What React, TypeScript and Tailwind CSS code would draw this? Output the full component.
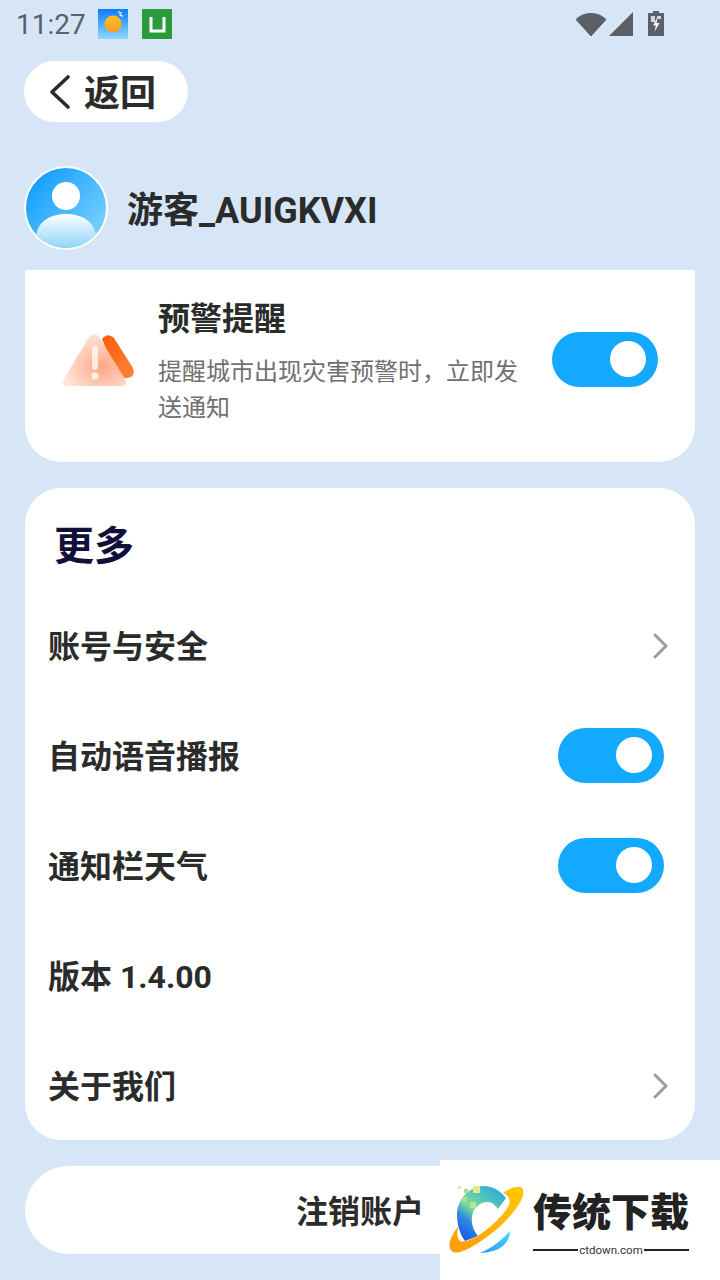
import React from "react";

const font = "font-['Roboto','Noto_Sans_CJK_SC',sans-serif]";

function Toggle() {
  return (
    <div className="flex h-[55px] w-[106px] items-center justify-end rounded-full bg-[#13a9ff] pr-[12px]">
      <div className="h-[36px] w-[36px] rounded-full bg-white" />
    </div>
  );
}

function Chevron() {
  return (
    <svg width="18" height="26" viewBox="0 0 18 26" fill="none" className="mr-[-5px] mb-[2px] block">
      <path d="M4 2 L15 13 L4 24" stroke="#9a9da1" strokeWidth="3" strokeLinecap="round" strokeLinejoin="round" />
    </svg>
  );
}

function Row({ label, right }: { label: string; right?: React.ReactNode }) {
  return (
    <div className="flex h-[110px] items-center justify-between pl-[23px]">
      <span className="text-[32px] leading-[40px] font-bold text-[#2b2b2b]">{label}</span>
      {right}
    </div>
  );
}

function StatusBar() {
  return (
    <div className="flex h-[48px] items-center justify-between pl-[16px] pr-[55px]">
      <div className="flex items-center">
        <span className="pt-[2px] text-[28px] leading-[50px] text-[#5b6066]">11:27</span>
        <svg width="30" height="30" viewBox="0 0 30 30" className="ml-[12px]">
          <defs>
            <linearGradient id="sky" x1="0" y1="0" x2="0" y2="1">
              <stop offset="0" stopColor="#0a7cff" />
              <stop offset="1" stopColor="#8fd8fb" />
            </linearGradient>
            <linearGradient id="sun" x1="0" y1="0" x2="0" y2="1">
              <stop offset="0" stopColor="#ffc21f" />
              <stop offset="1" stopColor="#ff9a2a" />
            </linearGradient>
          </defs>
          <rect width="30" height="30" fill="url(#sky)" />
          <circle cx="15" cy="15" r="8.5" fill="url(#sun)" />
          <path d="M20 3h2M24 3.5c-1.5 0-2 .8-2 1.8s.7 1.7 3 1.7" stroke="#fff" strokeWidth="1.2" fill="none" />
        </svg>
        <svg width="30" height="30" viewBox="0 0 30 30" className="ml-[14px]">
          <rect width="30" height="30" rx="1" fill="#2a9a3c" />
          <path d="M9 8 V22 H22 V8" stroke="#fff" strokeWidth="3" fill="none" />
        </svg>
      </div>
      <div className="flex items-center">
        <svg width="32" height="26" viewBox="0 0 32 26">
          <path d="M1 8.5 C9 0.5 23 0.5 31 8.5 L16 25 Z" fill="#5b6066" stroke="#5b6066" strokeLinejoin="round" />
        </svg>
        <svg width="26" height="26" viewBox="0 0 26 26" className="ml-[1px]">
          <path d="M25 1 V25 H1 Z" fill="#5b6066" />
        </svg>
        <svg width="18" height="28" viewBox="0 0 18 28" className="ml-[13px]">
          <path d="M6 1 H12 V3 H16 Q17 3 17 4 V25 Q17 26 16 26 H2 Q1 26 1 25 V4 Q1 3 2 3 H6 Z" fill="#5b6066" />
          <path d="M4 6 H8 V12 H4 Z M10 6 H14 V9 H10 Z" fill="#d6e6f7" opacity="0.9" />
          <path d="M10.5 7 L6 15.5 H8.8 L7.5 22 L12.5 13 H9.6 Z" fill="#f2f6fb" />
        </svg>
      </div>
    </div>
  );
}

function Avatar() {
  return (
    <svg width="84" height="84" viewBox="0 0 84 84" className="block shrink-0">
      <defs>
        <linearGradient id="av" x1="0.1" y1="0.2" x2="0.9" y2="0.9">
          <stop offset="0" stopColor="#16a0fd" />
          <stop offset="1" stopColor="#7fd2ff" />
        </linearGradient>
        <linearGradient id="body" x1="0" y1="0" x2="0" y2="1">
          <stop offset="0" stopColor="#ffffff" />
          <stop offset="1" stopColor="#8fd4fb" />
        </linearGradient>
        <clipPath id="avc">
          <circle cx="42" cy="42" r="40" />
        </clipPath>
      </defs>
      <circle cx="42" cy="42" r="41" fill="url(#av)" stroke="#ffffff" strokeWidth="2" />
      <circle cx="42" cy="30" r="14" fill="#ffffff" />
      <path d="M12 70 C14 54 28 48 42 48 C56 48 70 54 72 70 C64 78 54 82 42 82 C30 82 20 78 12 70 Z" fill="url(#body)" clipPath="url(#avc)" />
    </svg>
  );
}

function WarnIcon() {
  return (
    <svg width="72" height="55" viewBox="0 0 72 55" className="mb-[12px] block shrink-0">
      <defs>
        <linearGradient id="w1" x1="0.2" y1="0" x2="0.9" y2="1">
          <stop offset="0" stopColor="#ff5f10" />
          <stop offset="1" stopColor="#ff8238" />
        </linearGradient>
        <radialGradient id="w2" cx="0.62" cy="0.62" r="0.65">
          <stop offset="0" stopColor="#ffa784" />
          <stop offset="0.55" stopColor="#ffc9b4" />
          <stop offset="1" stopColor="#ffe7dd" />
        </radialGradient>
      </defs>
      <path d="M40 6 Q46 -1 52 5 L71 35 Q74 44 65 45 L56 45 Z" fill="url(#w1)" />
      <path d="M27 4 Q33 -2 37 4 L63 46 Q66 52 60 53 H5 Q-1 52 2 46 Z" fill="url(#w2)" />
      <rect x="30" y="13" width="6" height="24" rx="3" fill="#ffffff" opacity="0.7" />
      <circle cx="33" cy="43" r="3.5" fill="#ffffff" opacity="0.75" />
    </svg>
  );
}

function Logo() {
  return (
    <svg width="76" height="72" viewBox="8 24 76 72" className="block shrink-0">
      <defs>
        <linearGradient id="lg1" x1="0.9" y1="0" x2="0.2" y2="1">
          <stop offset="0" stopColor="#1fa6e4" />
          <stop offset="0.55" stopColor="#7ddc9a" />
          <stop offset="0.75" stopColor="#2c8ae0" />
          <stop offset="1" stopColor="#1c58e8" />
        </linearGradient>
        <linearGradient id="lg2" x1="1" y1="0" x2="0" y2="1">
          <stop offset="0" stopColor="#ffc800" />
          <stop offset="1" stopColor="#ff9a0a" />
        </linearGradient>
        <linearGradient id="lg3" x1="1" y1="0" x2="0" y2="1">
          <stop offset="0" stopColor="#45dcff" />
          <stop offset="1" stopColor="#2a90f0" />
        </linearGradient>
      </defs>
      <path d="M66 38 C60 30 52 26 43 26 C28 27 17 40 17 55 C17 65 20 74 25 81 L38 76 C33 70 31 63 32 57 C33 48 40 42 48 42 C52 42 55 45 58 49 Z" fill="url(#lg1)" />
      <path d="M63 33 C70 28 79 25 82 28 C85 31 83 38 79 44 C72 55 60 68 48 76 C36 85 20 95 13 92 C8 89 9 82 12 76 C14 72 16 69 18 67 C17 72 17 79 20 81 C24 83 34 79 42 73 C55 64 66 52 69 45 C71 40 68 35 63 33 Z" fill="url(#lg2)" />
      <path d="M70 71 C70 80 64 87 56 90 C50 92 45 93 40 93 C52 88 62 80 70 71 Z" fill="url(#lg3)" />
      <rect x="18" y="26" width="3" height="3" fill="#e6ec9a" />
      <rect x="24" y="29" width="4" height="4" fill="#a8dc86" />
      <rect x="33" y="26" width="7" height="7" fill="#dcec8e" />
      <rect x="22" y="37" width="5" height="5" fill="#a8e08e" />
      <rect x="30" y="42" width="6" height="6" fill="#b8e68e" />
    </svg>
  );
}

function Watermark() {
  return (
    <div className="absolute left-[440px] top-[1160px] flex h-[120px] w-[280px] items-start bg-white pl-[8px] pt-[24px]">
      <Logo />
      <div className="ml-[9px] flex w-[156px] flex-col items-stretch">
        <span className="mt-[3px] whitespace-nowrap text-[39px] leading-[52px] font-black text-[#222222]">传统下载</span>
        <div className="mt-[4px] flex items-center justify-between">
          <div className="h-[2px] w-[45px] bg-[#222222]" />
          <span className="text-[11.5px] leading-[14px] text-[#333333]">ctdown.com</span>
          <div className="h-[2px] w-[45px] bg-[#222222]" />
        </div>
      </div>
    </div>
  );
}

export default function App() {
  return (
    <div className={`relative h-[1280px] w-[720px] overflow-hidden bg-[#d6e6f7] ${font}`}>
      <StatusBar />

      <div className="ml-[24px] mt-[13px] flex h-[61px] w-[164px] items-center rounded-full bg-white pl-[25px]">
        <svg width="22" height="34" viewBox="0 0 22 34" fill="none" className="block">
          <path d="M19 2 L3 17 L19 32" stroke="#2b2b2b" strokeWidth="3.6" strokeLinecap="round" strokeLinejoin="round" />
        </svg>
        <span className="ml-[13px] pt-[4px] text-[36px] leading-[44px] font-bold text-[#2b2b2b]">返回</span>
      </div>

      <div className="ml-[24px] mt-[44px] flex items-center">
        <Avatar />
        <span className="ml-[19px] pt-[6px] text-[36px] leading-[44px] font-bold text-[#2b2b2b]">游客_AUIGKVXI</span>
      </div>

      <div className="mx-[25px] mt-[20px] flex h-[192px] items-center rounded-b-[36px] bg-white pl-[37px] pr-[37px]">
        <WarnIcon />
        <div className="ml-[24px] w-[370px] pb-[8px]">
          <div className="text-[32px] leading-[40px] font-bold text-[#2b2b2b]">预警提醒</div>
          <div className="mt-[15px] text-[24px] leading-[36px] text-[#707070]">提醒城市出现灾害预警时，立即发送通知</div>
        </div>
        <div className="mb-[14px] ml-auto">
          <Toggle />
        </div>
      </div>

      <div className="mx-[25px] mt-[26px] h-[652px] rounded-[36px] bg-white pr-[31px]">
        <div className="pl-[29px] pt-[35px] text-[40px] leading-[48px] font-bold text-[#12103a]">更多</div>
        <div className="mt-[21px]">
          <Row label="账号与安全" right={<Chevron />} />
          <Row label="自动语音播报" right={<div className="mb-[4px]"><Toggle /></div>} />
          <Row label="通知栏天气" right={<div className="mb-[4px]"><Toggle /></div>} />
          <Row label="版本 1.4.00" />
          <Row label="关于我们" right={<Chevron />} />
        </div>
      </div>

      <div className="mx-[25px] mt-[26px] flex h-[88px] items-center justify-center rounded-[44px] bg-white">
        <span className="pt-[4px] text-[32px] leading-[40px] font-bold text-[#2b2b2b]">注销账户</span>
      </div>

      <Watermark />
    </div>
  );
}
